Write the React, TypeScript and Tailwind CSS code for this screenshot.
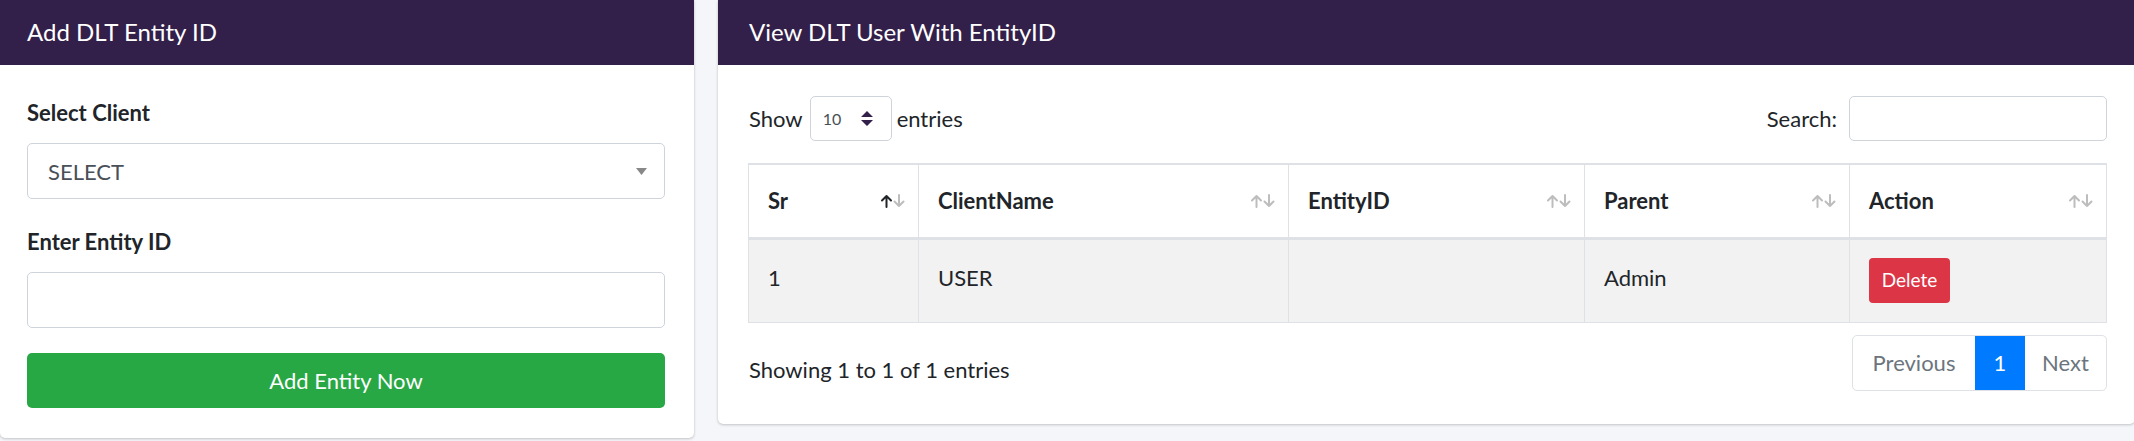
import React from "react";

type Col = { key: string; label: string; width: string; active?: boolean };

const columns: Col[] = [
  { key: "sr", label: "Sr", width: "w-[170px]", active: true },
  { key: "client", label: "ClientName", width: "w-[370px]" },
  { key: "entity", label: "EntityID", width: "w-[296px]" },
  { key: "parent", label: "Parent", width: "w-[265px]" },
  { key: "action", label: "Action", width: "w-[257px]" },
];

function SortIcon({ active }: { active?: boolean }) {
  // up + down arrows, like the datatables bootstrap sorting glyphs
  return (
    <svg width="26" height="14" viewBox="0 0 26 14" fill="none" strokeWidth="2" strokeLinecap="round" strokeLinejoin="round">
      <path d="M6.5 13V2M2 6.5L6.5 2 11 6.5" stroke={active ? "#212529" : "#bdbdbd"} />
      <path d="M19 1v11M14.5 7.5L19 12l4.5-4.5" stroke="#bdbdbd" />
    </svg>
  );
}

function CardHeader({ title, pad }: { title: string; pad: string }) {
  return (
    <div className={`h-[65px] bg-[#33204a] flex items-center ${pad} text-white text-[24px] leading-none`}>
      <span className="mt-[-2px]">{title}</span>
    </div>
  );
}

function AddEntityCard() {
  return (
    <div className="w-[694px] h-[438px] shrink-0 bg-white rounded-b-[5px] shadow-[0_0_1px_rgba(0,0,0,0.125),0_1px_3px_rgba(0,0,0,0.2)] flex flex-col">
      <CardHeader title="Add DLT Entity ID" pad="pl-[27px]" />

      <div className="pl-[27px] pr-[29px] pt-[31px] flex flex-col">
        <label className="block text-[22px] font-bold leading-[33px] mb-[14px]">Select Client</label>
        <div className="h-[56px] border border-[#ced4da] rounded-[5px] flex items-center justify-between pl-[20px] pr-[17px]">
          <span className="text-[22px] text-[#495057]">SELECT</span>
          <svg width="11" height="7" viewBox="0 0 11 7">
            <path d="M0 0h11L5.5 7z" fill="#888" />
          </svg>
        </div>

        <label className="block text-[22px] font-bold leading-[33px] mt-[26px] mb-[14px]">Enter Entity ID</label>
        <input className="h-[56px] border border-[#ced4da] rounded-[5px] px-[16px] text-[22px] outline-none" />

        <button className="mt-[25px] h-[55px] bg-[#28a745] rounded-[5px] text-white text-[22px]">
          Add Entity Now
        </button>
      </div>
    </div>
  );
}

function ViewEntityCard() {
  const td = "border border-[#dee2e6] pl-[19px] pb-[7px]";
  return (
    <div className="flex-1 h-[424px] bg-white rounded-b-[5px] shadow-[0_0_1px_rgba(0,0,0,0.125),0_1px_3px_rgba(0,0,0,0.2)] flex flex-col">
      <CardHeader title="View DLT User With EntityID" pad="pl-[31px]" />

      <div className="pl-[30px] pr-[28px] pt-[31px] flex flex-col">
        <div className="h-[45px] flex items-center justify-between text-[22px]">
          <div className="flex items-center pl-[1px]">
            <span>Show</span>
            <div className="ml-[7px] mr-[5px] w-[82px] h-[45px] border border-[#ced4da] rounded-[5px] flex items-center pl-[12px] pr-[18px] justify-between">
              <span className="text-[16px] text-[#495057]">10</span>
              <svg width="12" height="16" viewBox="0 0 12 16">
                <path d="M6 0l6 6H0z M0 9h12l-6 6z" fill="#33204a" />
              </svg>
            </div>
            <span>entries</span>
          </div>
          <div className="flex items-center">
            <span>Search:</span>
            <input className="ml-[12px] w-[258px] h-[45px] border border-[#ced4da] rounded-[5px] px-[12px] outline-none" />
          </div>
        </div>

        <table className="mt-[22px] w-[1358px] table-fixed border-collapse text-[22px]">
          <colgroup>
            {columns.map((c) => (
              <col key={c.key} className={c.width} />
            ))}
          </colgroup>
          <thead>
            <tr>
              {columns.map((c) => (
                <th
                  key={c.key}
                  className="h-[74px] border border-[#dee2e6] border-t-2 border-b-[3px] pl-[19px] pr-[12px] text-left font-bold"
                >
                  <div className="flex items-center justify-between">
                    <span>{c.label}</span>
                    <SortIcon active={c.active} />
                  </div>
                </th>
              ))}
            </tr>
          </thead>
          <tbody>
            <tr className="bg-[#f2f2f2]">
              <td className={`h-[84px] ${td}`}>1</td>
              <td className={td}>USER</td>
              <td className={td}></td>
              <td className={td}>Admin</td>
              <td className="border border-[#dee2e6] pl-[19px]">
                <button className="w-[81px] h-[45px] bg-[#dc3545] rounded-[4px] text-white text-[19px]">Delete</button>
              </td>
            </tr>
          </tbody>
        </table>

        <div className="mt-[12px] flex justify-between items-start text-[22px]">
          <div className="pt-[18px] leading-[33px] pl-[1px]">Showing 1 to 1 of 1 entries</div>
          <div className="flex h-[56px] border border-[#dee2e6] rounded-[5px] overflow-hidden">
            <div className="w-[122px] flex items-center justify-center text-[#6c757d]">Previous</div>
            <div className="w-[50px] flex items-center justify-center bg-[#007bff] text-white">1</div>
            <div className="w-[81px] flex items-center justify-center text-[#6c757d]">Next</div>
          </div>
        </div>
      </div>
    </div>
  );
}

export default function App() {
  return (
    <div className="w-[2134px] h-[441px] overflow-hidden bg-[#f4f6f9] font-['Lato',sans-serif] text-[#212529] flex items-start gap-[24px]">
      <AddEntityCard />
      <ViewEntityCard />
    </div>
  );
}
